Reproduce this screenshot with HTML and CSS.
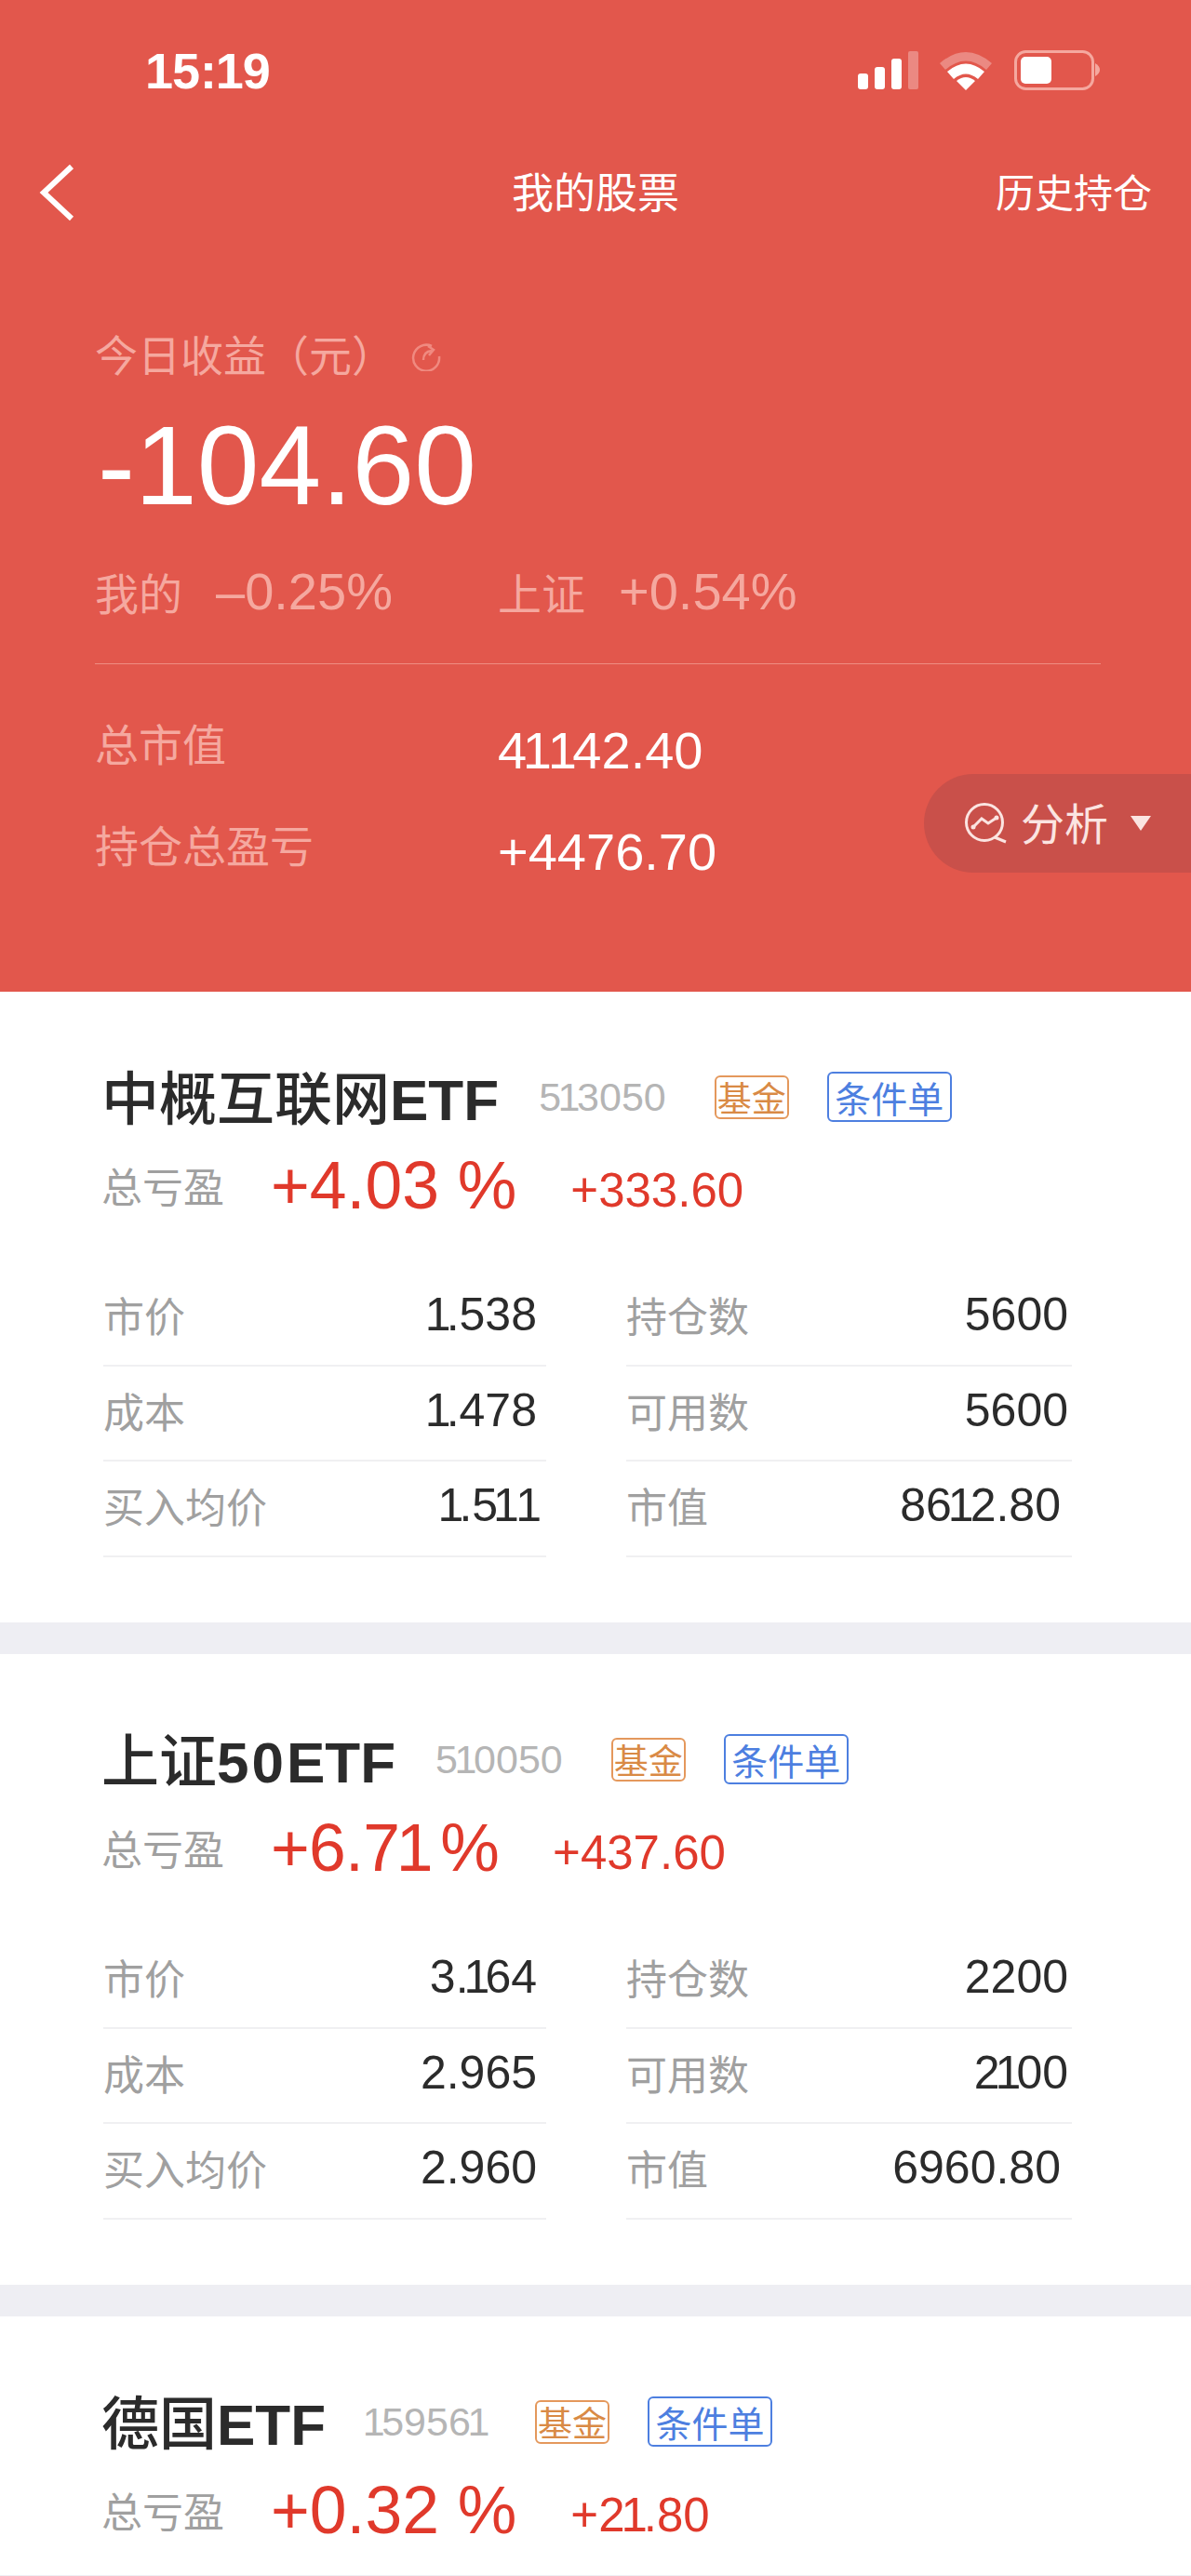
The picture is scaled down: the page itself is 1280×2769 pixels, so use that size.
FILE: index.html
```html
<!DOCTYPE html>
<html>

<head>
    <title>我的股票</title>
    <link rel="stylesheet" href="styles.css">
</head>

<body>
    <div class="page">
        <div class="head">
            <div class="statusBar">
                <span class="time"><span class="one">1</span>5:<span class="one">1</span>9</span>
                <svg class="statusIcons" width="262" height="44" viewBox="0 0 262 44">
                    <rect x="2" y="25" width="11" height="17" rx="3" fill="#fff" />
                    <rect x="20" y="18" width="11" height="24" rx="3" fill="#fff" />
                    <rect x="38" y="9" width="11" height="33" rx="3" fill="#fff" />
                    <rect x="56" y="1" width="11" height="41" rx="2" fill="#fff" opacity=".3" />
                    <path d="M90 14 Q118 -10 146 14 L140 21 Q118 2 96 21 Z" fill="#fff" opacity=".3" />
                    <path d="M98 23 Q118 6 138 23 L131 31 Q118 20 105 31 Z" fill="#fff" />
                    <path d="M108 33 Q118 25 128 33 L118 43 Z" fill="#fff" />
                    <rect x="171.500" y="1.500" width="83" height="40" rx="11" fill="none" stroke="#f5a89f" stroke-width="3" />
                    <rect x="177" y="7" width="33" height="29" rx="5" fill="#fff" />
                    <path d="M257 14 Q262 17 262 21 Q262 25 257 28 Z" fill="#f5a89f" />
                </svg>
            </div>

            <div class="nav">
                <svg class="back" width="38" height="60" viewBox="0 0 38 60">
                    <path d="M35 2 L5 30 L35 58" fill="none" stroke="#fff" stroke-width="6" />
                </svg>
                <span class="navTitle">我的股票</span>
                <span class="navRight">历史持仓</span>
            </div>

            <div class="hero">
                <div class="todayLabel">
                    今日收益（元）
                    <svg class="refresh" width="32" height="32" viewBox="0 0 32 32">
                        <path d="M22 5 A14 14 0 1 0 30 16" fill="none" stroke="#f08a80" stroke-width="2.500" />
                        <path d="M13 20 Q13 11 22 10 M18 5 L24 9 L19 15" fill="none" stroke="#f08a80" stroke-width="2.500" />
                    </svg>
                </div>
                <div class="todayNum">-<span class="one">1</span>04.60</div>
                <div class="compare">
                    <div class="compareItem"><span class="compareName">我的</span><span class="compareVal">–0.25%</span></div>
                    <div class="compareItem"><span class="compareName">上证</span><span class="compareVal">+0.54%</span></div>
                </div>
            </div>

            <div class="totals">
                <div class="totalRow">
                    <span class="totalName">总市值</span>
                    <span class="totalVal">4<span class="one">11</span>42.40</span>
                </div>
                <div class="totalRow">
                    <span class="totalName">持仓总盈亏</span>
                    <span class="totalVal">+4476.70</span>
                </div>
            </div>

            <div class="analyze">
                <svg width="46" height="44" viewBox="0 0 46 44">
                    <circle cx="22" cy="21" r="19.500" fill="none" stroke="#fbe4e1" stroke-width="3" />
                    <path d="M33 37 L45 42" fill="none" stroke="#fbe4e1" stroke-width="3" />
                    <path d="M10 26 L19 17 L26 22 L35 16" fill="none" stroke="#fbe4e1" stroke-width="3" />
                    <circle cx="10" cy="26" r="2.500" fill="#fbe4e1" />
                    <circle cx="35" cy="16" r="2.500" fill="#fbe4e1" />
                </svg>
                <span class="analyzeText">分析</span>
                <span class="analyzeArrow"></span>
            </div>
        </div>

        <div class="card">
            <div class="cardTitle">
                <span class="stockName">中概互联网<b>ETF</b></span>
                <span class="stockCode">5<span class="one">1</span>3050</span>
                <span class="tagFund">基金</span>
                <span class="tagOrder">条件单</span>
            </div>
            <div class="profit">
                <span class="profitName">总亏盈</span>
                <span class="profitPct">+4.03 %</span>
                <span class="profitVal">+333.60</span>
            </div>
            <div class="grid">
                <div class="cell"><span class="cellName">市价</span><span class="cellVal"><span class="one">1</span>.538</span></div>
                <div class="cell"><span class="cellName">持仓数</span><span class="cellVal">5600</span></div>
                <div class="cell"><span class="cellName">成本</span><span class="cellVal"><span class="one">1</span>.478</span></div>
                <div class="cell"><span class="cellName">可用数</span><span class="cellVal">5600</span></div>
                <div class="cell"><span class="cellName">买入均价</span><span class="cellVal"><span class="one">1</span>.5<span class="one">11</span></span></div>
                <div class="cell"><span class="cellName">市值</span><span class="cellVal marketVal">86<span class="one">1</span>2.80</span></div>
            </div>
        </div>

        <div class="card">
            <div class="cardTitle">
                <span class="stockName">上证<b class="digits">50</b><b>ETF</b></span>
                <span class="stockCode">5<span class="one">1</span>0050</span>
                <span class="tagFund">基金</span>
                <span class="tagOrder">条件单</span>
            </div>
            <div class="profit">
                <span class="profitName">总亏盈</span>
                <span class="profitPct narrowPct">+6.7<span class="one">1</span> %</span>
                <span class="profitVal">+437.60</span>
            </div>
            <div class="grid">
                <div class="cell"><span class="cellName">市价</span><span class="cellVal">3.<span class="one">1</span>64</span></div>
                <div class="cell"><span class="cellName">持仓数</span><span class="cellVal">2200</span></div>
                <div class="cell"><span class="cellName">成本</span><span class="cellVal">2.965</span></div>
                <div class="cell"><span class="cellName">可用数</span><span class="cellVal">2<span class="one">1</span>00</span></div>
                <div class="cell"><span class="cellName">买入均价</span><span class="cellVal">2.960</span></div>
                <div class="cell"><span class="cellName">市值</span><span class="cellVal marketVal">6960.80</span></div>
            </div>
        </div>

        <div class="card lastCard">
            <div class="cardTitle">
                <span class="stockName">德国<b>ETF</b></span>
                <span class="stockCode"><span class="one">1</span>5956<span class="one">1</span></span>
                <span class="tagFund">基金</span>
                <span class="tagOrder">条件单</span>
            </div>
            <div class="profit">
                <span class="profitName">总亏盈</span>
                <span class="profitPct">+0.32 %</span>
                <span class="profitVal">+2<span class="one">1</span>.80</span>
            </div>
        </div>
    </div>
</body>

</html>
```

FILE: styles.css
```css
* {
    box-sizing: border-box;
}

body {
    margin: 0;
    background-color: #fff;
    font-family: "Liberation Sans", "Noto Sans CJK SC", sans-serif;
}

.page {
    width: 1280px;
    height: 2769px;
    overflow: hidden;
    background-color: #eeeef3;
}

/* the reference font has a narrow 1 */
.one {
    margin: 0 -0.08em;
}

/* top red block */
.head {
    position: relative;
    height: 1066px;
    background-color: #e2574c;
    color: #fff;
}

.statusBar {
    height: 167px;
    padding: 54px 98px 0 157px;
    display: flex;
    justify-content: space-between;
    align-items: flex-start;
}

.time {
    font-size: 54px;
    line-height: 44px;
    font-weight: bold;
}

.time .one {
    margin: 0 -0.02em;
}

.nav {
    height: 74px;
    padding: 0 42px 0 42px;
    display: grid;
    grid-template-columns: 1fr auto 1fr;
    align-items: center;
}

.back {
    display: block;
    margin-top: 6px;
}

.navTitle {
    font-size: 45px;
}

.navRight {
    font-size: 42px;
    text-align: right;
}

.hero {
    padding: 108px 97px 0 102px;
}

.todayLabel {
    height: 60px;
    display: flex;
    align-items: center;
    font-size: 46px;
    color: #f5a89f;
}

.refresh {
    margin-left: 18px;
    margin-top: 8px;
}

.todayNum {
    margin-top: 33px;
    margin-left: 3px;
    height: 116px;
    line-height: 116px;
    font-size: 120px;
}

.todayNum .one {
    margin: 0;
}

.compare {
    margin-top: 47px;
    height: 109px;
    border-bottom: 1px solid #ef8d83;
    display: grid;
    grid-template-columns: 433px 1fr;
    color: #f5a89f;
}

.compareItem {
    height: 60px;
    display: flex;
    align-items: center;
    gap: 36px;
}

.compareName {
    font-size: 47px;
}

.compareVal {
    font-size: 56px;
}

.totals {
    padding: 56px 0 0 102px;
}

.totalRow {
    height: 109px;
    display: grid;
    grid-template-columns: 433px 1fr;
    align-items: flex-start;
}

.totalName {
    font-size: 47px;
    line-height: 64px;
    color: #f5a89f;
}

.totalVal {
    font-size: 56px;
    line-height: 64px;
    margin-top: 5px;
}

.totalVal .one {
    margin: 0 -0.08em;
}

/* floating pill on the right edge */
.analyze {
    position: absolute;
    top: 832px;
    right: 0;
    width: 287px;
    height: 106px;
    padding-left: 43px;
    background-color: #c9504a;
    border-radius: 53px 0 0 53px;
    display: flex;
    align-items: center;
    color: #fbe4e1;
}

.analyzeText {
    margin-left: 15px;
    margin-bottom: 6px;
    font-size: 47px;
}

.analyzeArrow {
    margin-left: 24px;
    border-left: 11px solid transparent;
    border-right: 11px solid transparent;
    border-top: 16px solid #fbe4e1;
}

/* stock cards */
.card {
    height: 678px;
    margin-bottom: 34px;
    padding: 80px 128px 0 111px;
    background-color: #fff;
}

.lastCard {
    height: 278px;
    margin-bottom: 0;
}

.cardTitle {
    height: 64px;
    display: flex;
    align-items: center;
}

.stockName {
    margin-left: -2px;
    margin-top: -3px;
    font-size: 62px;
    font-weight: 500;
    color: #2b2b2b;
    white-space: nowrap;
}

.stockName b {
    font-weight: bold;
}

.stockName .digits {
    letter-spacing: 3px;
}

.stockCode {
    margin-left: 43px;
    margin-top: 3px;
    font-size: 43px;
    color: #b5b5b5;
}

.tagFund,
.tagOrder {
    border-radius: 6px;
    display: flex;
    align-items: center;
    justify-content: center;
    white-space: nowrap;
}

.tagFund {
    margin-left: 52px;
    margin-top: 2px;
    width: 80px;
    height: 47px;
    border: 2px solid #e4985c;
    font-size: 37px;
    color: #d98a45;
}

.tagOrder {
    margin-left: 41px;
    margin-top: 2px;
    width: 134px;
    height: 54px;
    border: 2px solid #4d7fe0;
    font-size: 39px;
    color: #4d7fe0;
}

.profit {
    margin-top: 29px;
    height: 70px;
    display: flex;
    align-items: center;
}

.profitName {
    width: 182px;
    margin-left: -2px;
    flex-shrink: 0;
    font-size: 44px;
    color: #a0a0a0;
}

.profitPct {
    font-size: 71.500px;
    color: #e0392b;
}

.profitPct .one {
    margin: 0 -0.05em;
}

.narrowPct {
    word-spacing: -0.1em;
    letter-spacing: -0.01em;
}

.profitVal {
    margin-left: 58px;
    margin-top: 10px;
    font-size: 51px;
    color: #e0392b;
}

.grid {
    margin-top: 57px;
    display: grid;
    grid-template-columns: 476px 479px;
    column-gap: 86px;
}

.cell {
    height: 102.500px;
    padding-right: 10px;
    padding-bottom: 6px;
    border-bottom: 2px solid #f0f0f2;
    display: flex;
    justify-content: space-between;
    align-items: center;
}

.cell:nth-child(even) {
    padding-right: 4px;
}

.cellName {
    font-size: 44px;
    color: #a0a0a0;
}

.cellVal {
    font-size: 50px;
    color: #2b2b2b;
}

.cellVal .one {
    margin: 0 -0.1em;
}

.marketVal {
    margin-right: 8px;
}

.marketVal .one {
    margin: 0 -0.08em;
}
```
